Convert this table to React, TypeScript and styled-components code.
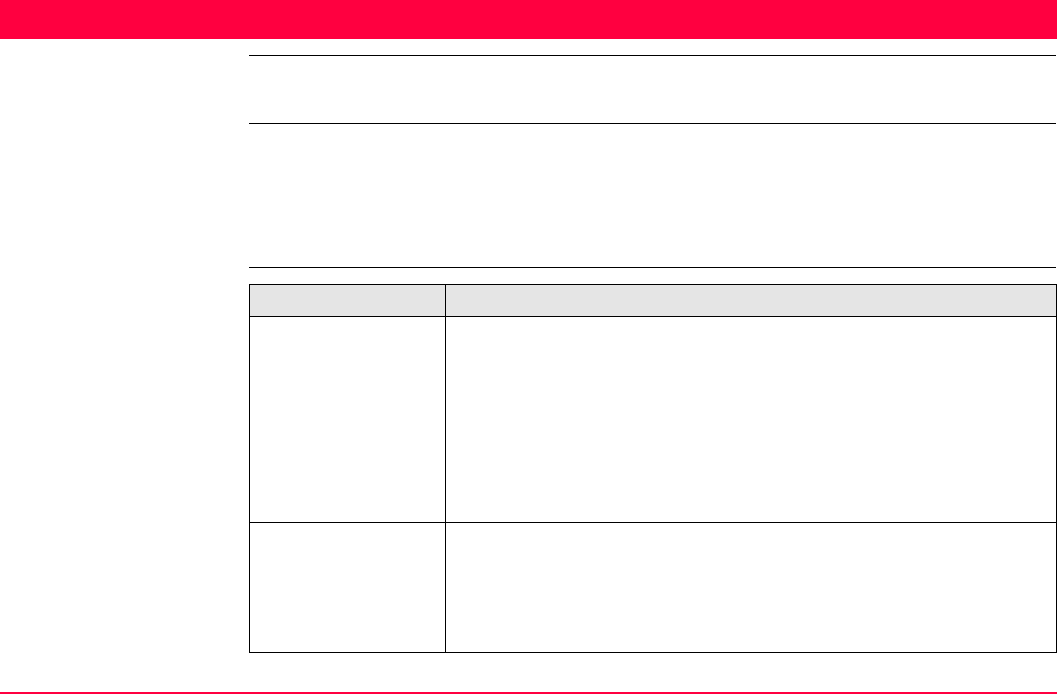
import styled, { createGlobalStyle } from 'styled-components';

const GlobalStyle = createGlobalStyle`
  html, body {
    margin: 0;
    padding: 0;
    background: #ffffff;
    font-family: "Liberation Sans", Arial, sans-serif;
  }
`;

const Page = styled.div`
  display: flex;
  flex-direction: column;
  height: 694px;
  overflow: hidden;
`;

const TopBar = styled.header`
  height: 39px;
  background: #ff0040;
  flex-shrink: 0;
`;

const Content = styled.main`
  margin: 16px 0 0 249px;
  width: 807px;
`;

const Block = styled.section<{ $height: number }>`
  height: ${({ $height }) => $height}px;
  border-top: 1px solid #000000;
  box-sizing: border-box;
`;

const Table = styled.table`
  margin-top: 16px;
  width: 808px;
  border-collapse: collapse;
  table-layout: fixed;
`;

const HeadCell = styled.th<{ $width?: number }>`
  height: 31px;
  width: ${({ $width }) => ($width ? `${$width}px` : 'auto')};
  padding: 0;
  background: #e5e5e5;
  border: 1px solid #000000;
`;

const Cell = styled.td<{ $height: number }>`
  height: ${({ $height }) => $height}px;
  padding: 0;
  border: 1px solid #000000;
`;

const BottomBar = styled.footer`
  margin-top: auto;
  margin-bottom: 0;
  height: 2px;
  background: #ff0040;
  flex-shrink: 0;
`;

const rows = [205, 129];

const App = () => {
  return (
    <>
      <GlobalStyle />
      <Page>
        <TopBar />
        <Content>
          <Block $height={68} />
          <Block $height={144} />
          <Block $height={1} />
          <Table>
            <thead>
              <tr>
                <HeadCell $width={195} />
                <HeadCell />
              </tr>
            </thead>
            <tbody>
              {rows.map((h, i) => (
                <tr key={i}>
                  <Cell $height={h} />
                  <Cell $height={h} />
                </tr>
              ))}
            </tbody>
          </Table>
        </Content>
        <BottomBar />
      </Page>
    </>
  );
};

export default App;
